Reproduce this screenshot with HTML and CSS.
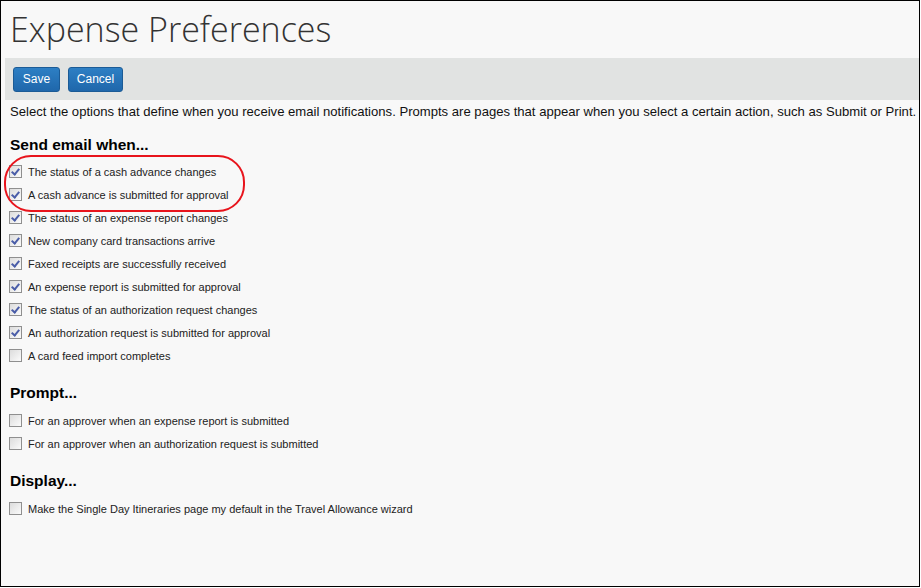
FILE: index.html
```html
<!DOCTYPE html>
<html>
<head>
<meta charset="utf-8">
<link rel="stylesheet" href="styles.css">
</head>
<body>
<div class="frame">
  <h1 class="title">Expense Preferences</h1>
  <div class="toolbar">
    <button class="btn btn-save">Save</button>
    <button class="btn btn-cancel">Cancel</button>
  </div>
  <p class="intro">Select the options that define when you receive email notifications. Prompts are pages that appear when you select a certain action, such as Submit or Print.</p>

  <h2 class="section first">Send email when...</h2>
  <ul class="options">
    <li><span class="cb checked"></span>The status of a cash advance changes</li>
    <li><span class="cb checked"></span>A cash advance is submitted for approval</li>
    <li><span class="cb checked"></span>The status of an expense report changes</li>
    <li><span class="cb checked"></span>New company card transactions arrive</li>
    <li><span class="cb checked"></span>Faxed receipts are successfully received</li>
    <li><span class="cb checked"></span>An expense report is submitted for approval</li>
    <li><span class="cb checked"></span>The status of an authorization request changes</li>
    <li><span class="cb checked"></span>An authorization request is submitted for approval</li>
    <li><span class="cb"></span>A card feed import completes</li>
  </ul>

  <h2 class="section">Prompt...</h2>
  <ul class="options later">
    <li><span class="cb"></span>For an approver when an expense report is submitted</li>
    <li><span class="cb"></span>For an approver when an authorization request is submitted</li>
  </ul>

  <h2 class="section">Display...</h2>
  <ul class="options later">
    <li><span class="cb"></span>Make the Single Day Itineraries page my default in the Travel Allowance wizard</li>
  </ul>

  <div class="highlight"></div>
</div>
</body>
</html>
```

FILE: styles.css
```css
html, body {
  margin: 0;
  padding: 0;
  background: #ffffff;
}

.frame {
  position: relative;
  box-sizing: border-box;
  width: 920px;
  height: 587px;
  border: 1px solid #000;
  background: #f8f8f8;
  font-family: "Liberation Sans", Arial, sans-serif;
  color: #1a1a1a;
  overflow: hidden;
}

.title {
  margin: 0;
  padding: 6px 0 0 9px;
  height: 57px;
  box-sizing: border-box;
  font-family: "Open Sans", sans-serif;
  font-weight: 300;
  font-size: 34px;
  line-height: 44px;
  color: #333;
  white-space: nowrap;
}

.toolbar {
  margin-left: 4px;
  height: 42px;
  background: #e1e3e2;
  display: flex;
  align-items: center;
  gap: 8px;
  padding-left: 8px;
  box-sizing: border-box;
}

.btn {
  height: 25px;
  box-sizing: border-box;
  border: 1px solid #1b5b96;
  border-radius: 3px;
  background: linear-gradient(#2d7fc4, #1f67ab);
  color: #fff;
  font-family: "Liberation Sans", Arial, sans-serif;
  font-size: 12px;
  padding: 0;
}
.btn-save { width: 47px; }
.btn-cancel { width: 55px; }

.intro {
  margin: 3px 0 0 9px;
  font-size: 13.1px;
  line-height: 18px;
  color: #111;
  white-space: nowrap;
}

.section {
  margin: 16px 0 0 9px;
  font-size: 15.5px;
  line-height: 20px;
  font-weight: bold;
  color: #000;
}
.section.first {
  margin-top: 14px;
}

.options {
  list-style: none;
  margin: 5px 0 0 0;
  padding: 0;
}
.options.later {
  margin-top: 6px;
}

.options li {
  display: flex;
  align-items: center;
  height: 23px;
  padding-left: 8px;
  font-size: 11px;
  color: #222;
}

.cb {
  width: 11px;
  height: 11px;
  border: 1px solid #8f8f8f;
  background: linear-gradient(135deg, #dcdcdc, #fbfbfb);
  margin-right: 6px;
  position: relative;
  flex: none;
}
.cb.checked::after {
  content: "";
  position: absolute;
  left: 3px;
  top: 1px;
  width: 3px;
  height: 6px;
  border: solid #4a5da8;
  border-width: 0 2px 2px 0;
  transform: rotate(40deg);
}

.highlight {
  position: absolute;
  left: 3px;
  top: 154px;
  width: 237px;
  height: 53px;
  border: 2px solid #e8141c;
  border-radius: 27px;
}
```
